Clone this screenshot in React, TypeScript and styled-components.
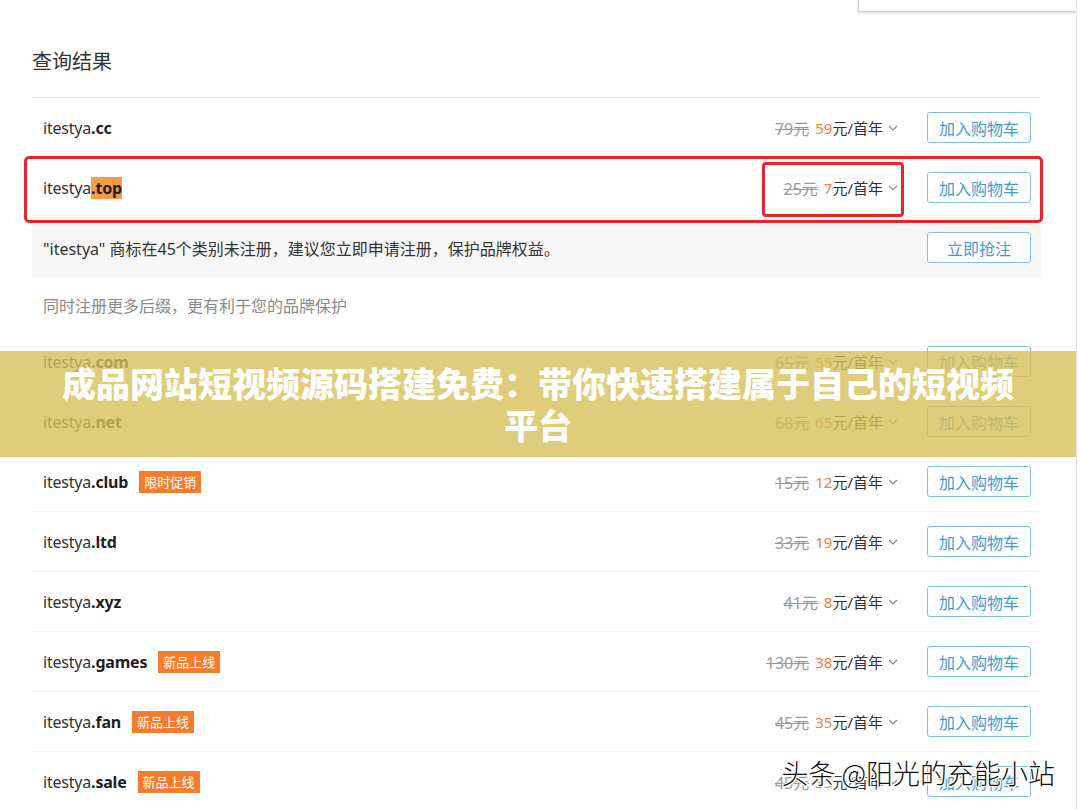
import React from "react";
import styled, { createGlobalStyle } from "styled-components";

const Global = createGlobalStyle`
  html, body { margin: 0; padding: 0; background: #fff; }
  body {
    font-family: "Noto Sans", "Noto Sans CJK SC", sans-serif;
    color: #333;
  }
  * { box-sizing: border-box; }
`;

const Page = styled.div`
  position: relative;
  width: 1077px;
  height: 809px;
  overflow: hidden;
  padding: 0 35px 0 32px;
  border-right: 1px solid #e4e4e4;
`;

const Popup = styled.div`
  position: absolute;
  top: -20px;
  left: 858px;
  width: 260px;
  height: 32px;
  background: #fff;
  border: 1px solid #cfcfcf;
  box-shadow: 0 1px 3px rgba(0, 0, 0, 0.18);
`;

const Title = styled.h2`
  margin: 0;
  padding-top: 47px;
  height: 97px;
  font-size: 20px;
  line-height: 28px;
  font-weight: 400;
  color: #333;
  font-family: "Noto Sans CJK SC", sans-serif;
`;

const Table = styled.div`
  border-top: 1px solid #e5e5e5;
  display: flex;
  flex-direction: column;
`;

const Row = styled.div<{ $h?: number; $bg?: string; $line?: boolean; $front?: boolean }>`
  position: relative;
  z-index: ${(p) => (p.$front ? 2 : "auto")};
  display: flex;
  align-items: center;
  justify-content: space-between;
  height: ${(p) => p.$h ?? 60}px;
  padding: 0 10px 0 11px;
  background: ${(p) => p.$bg ?? "transparent"};
  border-bottom: ${(p) => (p.$line === false ? "none" : "1px solid #f1f1f1")};
`;

const Left = styled.div`
  display: flex;
  align-items: center;
  gap: 11px;
`;

const Domain = styled.span`
  font-family: "Noto Sans", "Noto Sans CJK SC", sans-serif;
  font-size: 16px;
  color: #333;
  letter-spacing: -0.2px;
`;

const Tld = styled.b<{ $mark?: boolean }>`
  font-weight: 700;
  color: #1e1e1e;
  background: ${(p) => (p.$mark ? "#f79a45" : "transparent")};
`;

const Badge = styled.span`
  display: inline-flex;
  align-items: center;
  height: 22px;
  padding: 0 5px;
  background: #f47d2b;
  color: #fff;
  font-size: 13px;
  font-family: "Noto Sans CJK SC", sans-serif;
`;

const Right = styled.div`
  display: flex;
  align-items: center;
  gap: 29px;
`;

const Price = styled.div`
  position: relative;
  display: flex;
  align-items: center;
  font-size: 15px;
  font-family: "Noto Sans", "Noto Sans CJK SC", sans-serif;
  color: #333;
  white-space: pre;
`;

const Old = styled.span`
  color: #9a9a9a;
  text-decoration: line-through;
  margin-right: 6px;
  font-size: 16px;
`;

const Now = styled.span`
  color: #f0803c;
`;

const Chevron = styled.svg`
  margin-left: 5px;
  width: 10px;
  height: 6px;
`;

const Button = styled.button`
  width: 104px;
  height: 31px;
  border: 1px solid #7fc0e8;
  border-radius: 3px;
  background: #fff;
  color: #3f9bd8;
  font-size: 16px;
  font-family: "Noto Sans CJK SC", sans-serif;
  padding: 0;
  cursor: pointer;
`;

const Notice = styled.span`
  font-size: 16px;
  color: #333;
  font-family: "Noto Sans", "Noto Sans CJK SC", sans-serif;
`;

const Hint = styled.span`
  font-size: 16px;
  color: #8a8a8a;
  font-family: "Noto Sans CJK SC", sans-serif;
`;

const RedBox = styled.div`
  position: absolute;
  top: -2px;
  left: -8px;
  right: -2px;
  bottom: -6px;
  border: 3px solid #e5262b;
  border-radius: 5px;
  pointer-events: none;
`;

const RedInner = styled.div`
  position: absolute;
  top: -14px;
  left: -21px;
  right: -6px;
  bottom: -17px;
  border: 3px solid #e5262b;
  border-radius: 4px;
  pointer-events: none;
`;

const Banner = styled.div`
  position: absolute;
  z-index: 5;
  left: 0;
  right: 0;
  top: 351px;
  height: 106px;
  display: flex;
  align-items: center;
  justify-content: center;
  padding: 0 50px;
  background: rgba(214, 193, 90, 0.8);
  color: #fff;
  font-family: "Noto Sans CJK SC", sans-serif;
  font-weight: 900;
  font-size: 34px;
  line-height: 42px;
  text-align: center;
`;

const Watermark = styled.div`
  position: absolute;
  z-index: 5;
  right: 21px;
  top: 753px;
  font-family: "Noto Sans CJK SC", sans-serif;
  font-size: 27px;
  font-weight: 300;
  color: #111;
  text-shadow: 1px 0 0 #fff, -1px 0 0 #fff, 0 1px 0 #fff, 0 -1px 0 #fff,
    1px 1px 0 #fff, -1px -1px 0 #fff, 1px -1px 0 #fff, -1px 1px 0 #fff;
`;

type Item = {
  tld: string;
  old: string;
  now: string;
  badge?: string;
};

const PriceBox: React.FC<{ old: string; now: string; ring?: boolean }> = ({ old, now, ring }) => (
  <Price>
    <Old>{old}元</Old>
    <Now>{now}</Now>元/首年
    <Chevron viewBox="0 0 10 6">
      <path d="M1 1 L5 5 L9 1" fill="none" stroke="#8a8a8a" strokeWidth="1.2" />
    </Chevron>
    {ring && <RedInner />}
  </Price>
);

const DomainRow: React.FC<{ item: Item; mark?: boolean; children?: React.ReactNode }> = ({
  item,
  mark,
  children,
}) => (
  <Row $front={mark}>
    <Left>
      <Domain>
        itestya<Tld $mark={mark}>.{item.tld}</Tld>
      </Domain>
      {item.badge && <Badge>{item.badge}</Badge>}
    </Left>
    <Right>
      <PriceBox old={item.old} now={item.now} ring={mark} />
      <Button>加入购物车</Button>
    </Right>
    {children}
  </Row>
);

const more: Item[] = [
  { tld: "com", old: "65", now: "55" },
  { tld: "net", old: "68", now: "65" },
  { tld: "club", old: "15", now: "12", badge: "限时促销" },
  { tld: "ltd", old: "33", now: "19" },
  { tld: "xyz", old: "41", now: "8" },
  { tld: "games", old: "130", now: "38", badge: "新品上线" },
  { tld: "fan", old: "45", now: "35", badge: "新品上线" },
  { tld: "sale", old: "45", now: "35", badge: "新品上线" },
];

export default function App() {
  return (
    <>
      <Global />
      <Page>
        <Popup />
        <Title>查询结果</Title>
        <Table>
          <DomainRow item={{ tld: "cc", old: "79", now: "59" }} />
          <DomainRow item={{ tld: "top", old: "25", now: "7" }} mark>
            <RedBox />
          </DomainRow>
          <Row $bg="#f7f7f7" $h={59} $line={false}>
            <Notice>"itestya" 商标在45个类别未注册，建议您立即申请注册，保护品牌权益。</Notice>
            <Button>立即抢注</Button>
          </Row>
          <Row $h={55} $line={false}>
            <Hint>同时注册更多后缀，更有利于您的品牌保护</Hint>
          </Row>
          {more.map((it) => (
            <DomainRow key={it.tld} item={it} />
          ))}
        </Table>
        <Banner>成品网站短视频源码搭建免费：带你快速搭建属于自己的短视频平台</Banner>
        <Watermark>头条 @阳光的充能小站</Watermark>
      </Page>
    </>
  );
}
